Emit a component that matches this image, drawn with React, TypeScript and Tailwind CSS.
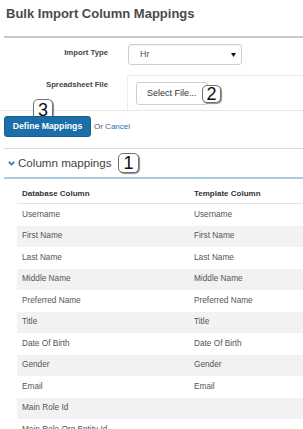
const rows: [string, string][] = [
  ["Username", "Username"],
  ["First Name", "First Name"],
  ["Last Name", "Last Name"],
  ["Middle Name", "Middle Name"],
  ["Preferred Name", "Preferred Name"],
  ["Title", "Title"],
  ["Date Of Birth", "Date Of Birth"],
  ["Gender", "Gender"],
  ["Email", "Email"],
  ["Main Role Id", ""],
  ["Main Role Org Entity Id", ""],
];

function Callout({ n, className }: { n: string; className: string }) {
  return (
    <div
      className={`absolute flex items-center justify-center bg-white border border-[#707070] rounded-[5px] shadow-[1px_1px_1px_rgba(0,0,0,0.45)] text-[18px] leading-none text-[#111] ${className}`}
    >
      {n}
    </div>
  );
}

export default function App() {
  return (
    <div className="w-[303px] h-[429px] overflow-hidden bg-white font-['Liberation_Sans',Arial,sans-serif]">
      <div className="h-[36px] pl-[6px] pt-[6px] text-[13px] leading-[16px] font-bold text-[#4a4a4a]">
        Bulk Import Column Mappings
      </div>
      <div className="ml-[4px] h-[2px] bg-[#c8c8c8]" />

      {/* import type */}
      <div className="flex mt-[6px]">
        <div className="w-[108px] pt-[3px] text-right text-[7.75px] leading-[12px] font-bold text-[#444]">
          Import Type
        </div>
        <div className="ml-[20px] w-[114px] h-[21px] border border-[#cfcfcf] rounded-[3px] shadow-[inset_0_1px_1px_rgba(0,0,0,0.06)] flex items-center pl-[11px] pr-[5px]">
          <span className="flex-1 text-[9px] text-[#555]">Hr</span>
          <svg width="5" height="4" viewBox="0 0 5 4">
            <path d="M0 0 L5 0 L2.5 4 Z" fill="#111" />
          </svg>
        </div>
      </div>

      {/* spreadsheet file */}
      <div className="flex mt-[10px]">
        <div className="w-[108px] pt-[4px] text-right text-[7.75px] leading-[12px] font-bold text-[#444]">
          Spreadsheet File
        </div>
        <div className="relative ml-[19px] flex-1 h-[35px] border-t border-l border-[#ececec] pl-[8px] pt-[6px]">
          <div className="w-[72px] h-[23px] border border-[#cfcfcf] rounded-[3px] bg-white flex items-center pl-[10px] text-[9px] text-[#333]">
            Select File...
          </div>
          <Callout n="2" className="left-[74px] top-[9px] w-[19px] h-[18px]" />
        </div>
      </div>
      <div className="h-px bg-[#e6e6e6]" />

      {/* actions */}
      <div className="relative flex items-center mt-[5px]">
        <Callout n="3" className="left-[33px] -top-[17px] w-[20px] h-[22px] items-start pt-[1px] z-0" />
        <button className="relative z-10 ml-[4px] w-[87px] h-[21px] rounded-[3px] bg-[#1c6ea8] border border-[#175f93] text-white text-[8.7px] font-bold">
          Define Mappings
        </button>
        <span className="ml-[3px] text-[8px] text-[#555]">
          Or <span className="text-[#2a6db0]">Cancel</span>
        </span>
      </div>

      <div className="ml-[4px] mt-[11px] h-px bg-[#dcdcdc]" />

      {/* section */}
      <div className="relative h-[28px] flex items-center pl-[8px]">
        <svg width="7" height="5" viewBox="0 0 7 5" className="mt-[1px]">
          <path d="M0.8 0.8 L3.5 3.6 L6.2 0.8" fill="none" stroke="#2b78b8" strokeWidth="1.7" />
        </svg>
        <span className="ml-[3px] text-[11.6px] text-[#444]">Column mappings</span>
        <Callout n="1" className="left-[118px] top-[4px] w-[21px] h-[20px]" />
      </div>
      <div className="ml-[4px] h-[2px] bg-[#a6cce8]" />

      {/* table */}
      <div className="ml-[17px] mt-[3px]">
        <div className="flex h-[22px] pt-[2px] items-center border-b border-[#e2e2e2] text-[8px] font-bold text-[#333]">
          <div className="w-[172px] pl-[5px]">Database Column</div>
          <div className="pl-[5px]">Template Column</div>
        </div>
        {rows.map(([a, b], i) => (
          <div
            key={a}
            className={`flex h-[21.5px] items-center text-[8.25px] text-[#555] ${i % 2 === 1 ? "bg-[#f2f2f2]" : "bg-white"}`}
          >
            <div className="w-[172px] pl-[5px]">{a}</div>
            <div className="pl-[5px]">{b}</div>
          </div>
        ))}
      </div>
    </div>
  );
}
